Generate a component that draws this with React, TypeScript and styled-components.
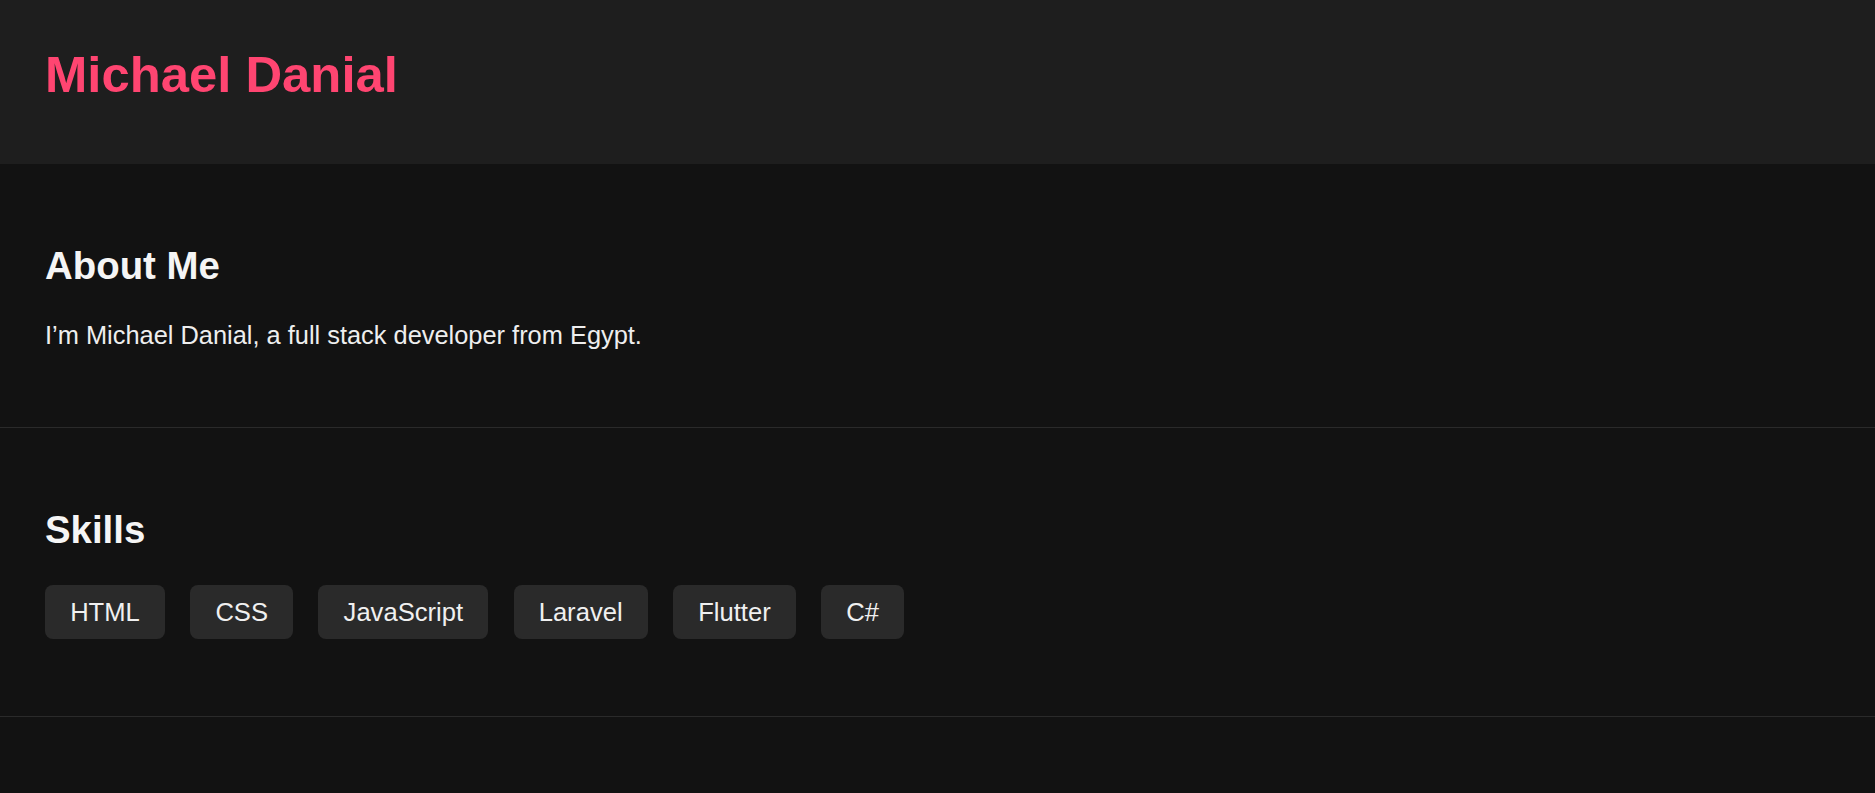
import React from "react";
import styled, { createGlobalStyle } from "styled-components";

const GlobalStyle = createGlobalStyle`
  html, body {
    margin: 0;
    padding: 0;
    background: #121212;
  }
  body {
    font-family: "Liberation Sans", Arial, sans-serif;
    color: #f0f0f0;
  }
  * { box-sizing: border-box; }
`;

const Page = styled.div`
  min-height: 793px;
  background: #121212;
  font-size: 25.6px;
`;

const Header = styled.header`
  background: #1e1e1e;
  height: 164px;
  padding: 46px 45px 0;
`;

const Title = styled.h1`
  margin: 0;
  font-size: 50.8px;
  line-height: 58.8px;
  font-weight: 700;
  color: #ff4571;
`;

const Section = styled.section`
  padding: 80px 45px 76.5px;
  border-bottom: 1px solid #2a2a2a;
`;

const Heading = styled.h2`
  margin: 0 0 33px;
  font-size: 38.4px;
  line-height: 44px;
  font-weight: 700;
  color: #f5f5f5;
`;

const Text = styled.p`
  margin: 0;
  font-size: 25.4px;
  line-height: 29.4px;
  color: #eeeeee;
`;

const SkillList = styled.ul`
  list-style: none;
  margin: 0;
  padding: 0;
  display: flex;
  flex-wrap: wrap;
  gap: 25.3px;
`;

const Skill = styled.li`
  background: #2a2a2a;
  color: #f0f0f0;
  border-radius: 8px;
  padding: 12.6px 25.15px;
  font-size: 25.6px;
  line-height: 29px;
`;

const skills = ["HTML", "CSS", "JavaScript", "Laravel", "Flutter", "C#"];

export default function App() {
  return (
    <Page>
      <GlobalStyle />
      <Header>
        <Title>Michael Danial</Title>
      </Header>
      <Section>
        <Heading>About Me</Heading>
        <Text>I’m Michael Danial, a full stack developer from Egypt.</Text>
      </Section>
      <Section>
        <Heading>Skills</Heading>
        <SkillList>
          {skills.map((s) => (
            <Skill key={s}>{s}</Skill>
          ))}
        </SkillList>
      </Section>
    </Page>
  );
}
